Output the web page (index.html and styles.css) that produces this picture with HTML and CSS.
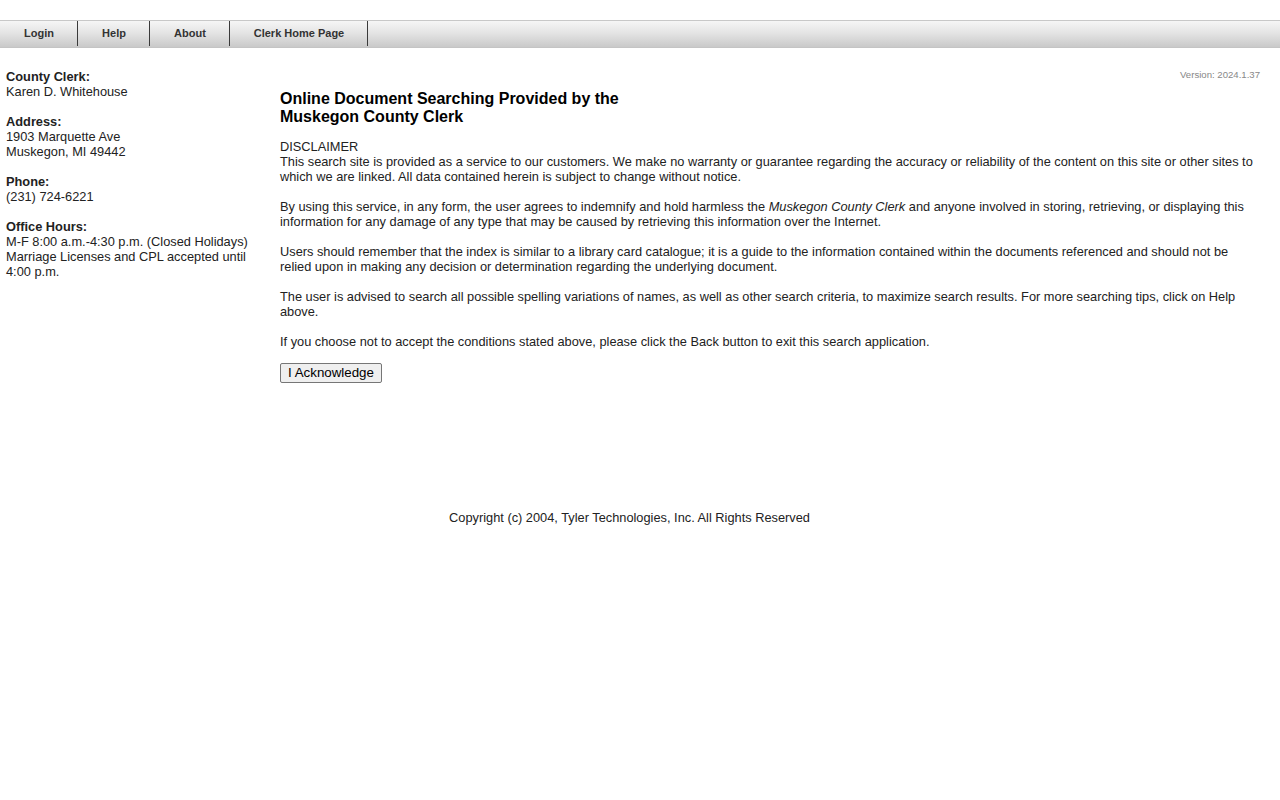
FILE: index.html
```html
<!DOCTYPE html>
<html>
<head>
<meta charset="utf-8">
<title>Muskegon County Clerk</title>
<link rel="stylesheet" href="styles.css">
</head>
<body>
<div class="nav">
  <a class="tab">Login</a><a class="tab">Help</a><a class="tab">About</a><a class="tab">Clerk Home Page</a>
</div>
<div class="layout">
  <div class="side">
    <p><b>County Clerk:</b><br>Karen D. Whitehouse</p>
    <p><b>Address:</b><br>1903 Marquette Ave<br>Muskegon, MI 49442</p>
    <p><b>Phone:</b><br>(231) 724-6221</p>
    <p><b>Office Hours:</b><br>M-F 8:00 a.m.-4:30 p.m. (Closed Holidays)<br>Marriage Licenses and CPL accepted until 4:00 p.m.</p>
  </div>
  <div class="main">
    <div class="version">Version: 2024.1.37</div>
    <h1>Online Document Searching Provided by the<br>Muskegon County Clerk</h1>
    <p>DISCLAIMER<br>This search site is provided as a service to our customers. We make no warranty or guarantee regarding the accuracy or reliability of the content on this site or other sites to which we are linked. All data contained herein is subject to change without notice.</p>
    <p>By using this service, in any form, the user agrees to indemnify and hold harmless the <i>Muskegon County Clerk</i> and anyone involved in storing, retrieving, or displaying this information for any damage of any type that may be caused by retrieving this information over the Internet.</p>
    <p>Users should remember that the index is similar to a library card catalogue; it is a guide to the information contained within the documents referenced and should not be relied upon in making any decision or determination regarding the underlying document.</p>
    <p>The user is advised to search all possible spelling variations of names, as well as other search criteria, to maximize search results. For more searching tips, click on Help above.</p>
    <p class="last">If you choose not to accept the conditions stated above, please click the Back button to exit this search application.</p>
    <button class="ack">I Acknowledge</button>
  </div>
</div>
<div class="footer">Copyright (c) 2004, Tyler Technologies, Inc. All Rights Reserved</div>
</body>
</html>
```
FILE: styles.css
```css
html, body {
  margin: 0;
  padding: 0;
  background: #fff;
}
body {
  font-family: "Liberation Sans", Arial, sans-serif;
  font-size: 12.8px;
  line-height: 15px;
  color: #222;
  padding-top: 20px;
}
.nav {
  display: flex;
  height: 26px;
  border-top: 1px solid #c8c8c8;
  border-bottom: 1px solid #c4c4c4;
  background: linear-gradient(#f6f6f6, #e2e2e2 50%, #c9c9c9);
}
.tab {
  display: flex;
  align-items: center;
  justify-content: center;
  height: 25px;
  padding-left: 1px;
  border-right: 1px solid #3a3a3a;
  font-size: 11px;
  font-weight: bold;
  color: #333;
  box-sizing: border-box;
}
.tab:nth-child(1) { width: 78px; }
.tab:nth-child(2) { width: 72px; }
.tab:nth-child(3) { width: 80px; }
.tab:nth-child(4) { width: 138px; }
.layout {
  display: flex;
  padding-top: 21px;
}
.side {
  width: 250px;
  padding-left: 6px;
  margin-right: 24px;
  flex: none;
}
.side p {
  margin: 0 0 15px 0;
}
.main {
  flex: 1;
  padding-right: 20px;
}
.version {
  text-align: right;
  font-size: 9.6px;
  line-height: 10px;
  color: #888;
  margin-top: 1px;
}
h1 {
  font-size: 16px;
  line-height: 18px;
  font-weight: bold;
  color: #000;
  margin: 10px 0 13px 0;
}
.main p {
  margin: 0 0 15px 0;
}
.main p.last {
  margin-bottom: 14px;
}
.ack {
  font-family: "Liberation Sans", Arial, sans-serif;
  font-size: 13.33px;
  line-height: 16px;
  height: 20px;
  padding: 0 7px;
  margin: 0;
  color: #000;
  background: #efefef;
  border: 1px solid #767676;
  border-radius: 2px;
}
.footer {
  text-align: center;
  padding-right: 21px;
  margin-top: 127px;
  line-height: 15px;
}
```
